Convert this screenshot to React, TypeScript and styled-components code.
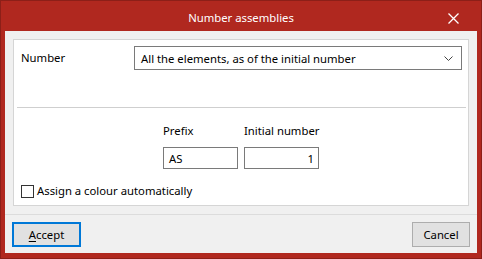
import React from "react";
import styled, { createGlobalStyle } from "styled-components";

const Global = createGlobalStyle`
  html, body { margin: 0; padding: 0; background: #fff; }
  body { font-family: "Noto Sans", "Segoe UI", sans-serif; font-size: 11.3px; color: #000; }
  * { box-sizing: border-box; }
`;

const Window = styled.div`
  width: 482px;
  height: 259px;
  background: #b0281f;
  border: 1px solid #8c1f18;
  display: flex;
  flex-direction: column;
  padding: 0 4px 5px 4px;
`;

const TitleBar = styled.div`
  height: 30px;
  display: flex;
  align-items: center;
  justify-content: center;
  position: relative;
  color: #fff;
  font-size: 11.3px;
  padding-top: 2px;
`;

const CloseBtn = styled.div`
  position: absolute;
  right: 18px;
  top: 12px;
  width: 11px;
  height: 11px;
  display: flex;
`;

const Client = styled.div`
  flex: 1;
  background: #f0f0f0;
  display: flex;
  flex-direction: column;
  padding: 8px 8px 0 8px;
`;

const Panel = styled.div`
  height: 167px;
  background: #fff;
  border: 1px solid #d5d5d5;
  display: flex;
  flex-direction: column;
  padding: 6px 6px 0 7px;
`;

const Row = styled.div`
  display: flex;
  align-items: center;
`;

const Label = styled.span<{ $w?: number }>`
  width: ${(p) => (p.$w ? `${p.$w}px` : "auto")};
  line-height: 16px;
  white-space: nowrap;
`;

const Select = styled.div`
  flex: 1;
  height: 24px;
  border: 1px solid #7a7a7a;
  display: flex;
  align-items: center;
  padding: 0 8px 0 6px;
  justify-content: space-between;
`;

const Divider = styled.div`
  height: 1px;
  background: #cfcfcf;
  margin: 37px -4px 0 -4px;
`;

const Fields = styled.div`
  display: flex;
  gap: 6px;
  margin: 15px 0 0 142px;
`;

const Field = styled.div`
  display: flex;
  flex-direction: column;
  gap: 8px;
`;

const Input = styled.div<{ $align?: string }>`
  width: 75px;
  height: 22px;
  border: 1px solid #7a7a7a;
  display: flex;
  align-items: center;
  justify-content: ${(p) => (p.$align === "right" ? "flex-end" : "flex-start")};
  padding: 0 4px 0 5px;
`;

const CheckRow = styled.label`
  display: flex;
  align-items: center;
  gap: 3px;
  margin-top: 14px;
`;

const Box = styled.span`
  width: 13px;
  height: 13px;
  border: 1px solid #333;
  background: #fff;
`;

const Footer = styled.div`
  flex: 1;
  margin: 8px -8px 0 -8px;
  border-top: 1px solid #dcdcdc;
  display: flex;
  justify-content: space-between;
  align-items: flex-start;
  padding: 7px 7px 0 7px;
`;

const Button = styled.button<{ $default?: boolean }>`
  height: 25px;
  font: inherit;
  color: #000;
  background: #e1e1e1;
  border: ${(p) => (p.$default ? "2px solid #0078d7" : "1px solid #adadad")};
  width: ${(p) => (p.$default ? "69px" : "58px")};
  padding: 0;
  display: flex;
  align-items: center;
  justify-content: center;
  u { text-decoration: underline; text-underline-offset: 2px; }
`;

export default function App() {
  return (
    <>
      <Global />
      <Window>
        <TitleBar>
          Number assemblies
          <CloseBtn>
            <svg width="11" height="11" viewBox="0 0 11 11">
              <path d="M0.5 0.5 L10.5 10.5 M10.5 0.5 L0.5 10.5" stroke="#fff" strokeWidth="1.3" />
            </svg>
          </CloseBtn>
        </TitleBar>
        <Client>
          <Panel>
            <Row>
              <Label $w={113}>Number</Label>
              <Select>
                <span>All the elements, as of the initial number</span>
                <svg width="9" height="5" viewBox="0 0 9 5">
                  <path d="M0.5 0.5 L4.5 4.5 L8.5 0.5" stroke="#444" fill="none" strokeWidth="1" />
                </svg>
              </Select>
            </Row>
            <Divider />
            <Fields>
              <Field>
                <Label>Prefix</Label>
                <Input>AS</Input>
              </Field>
              <Field>
                <Label>Initial number</Label>
                <Input $align="right">1</Input>
              </Field>
            </Fields>
            <CheckRow>
              <Box />
              <Label>Assign a colour automatically</Label>
            </CheckRow>
          </Panel>
          <Footer>
            <Button $default>
              <span><u>A</u>ccept</span>
            </Button>
            <Button>Cancel</Button>
          </Footer>
        </Client>
      </Window>
    </>
  );
}
